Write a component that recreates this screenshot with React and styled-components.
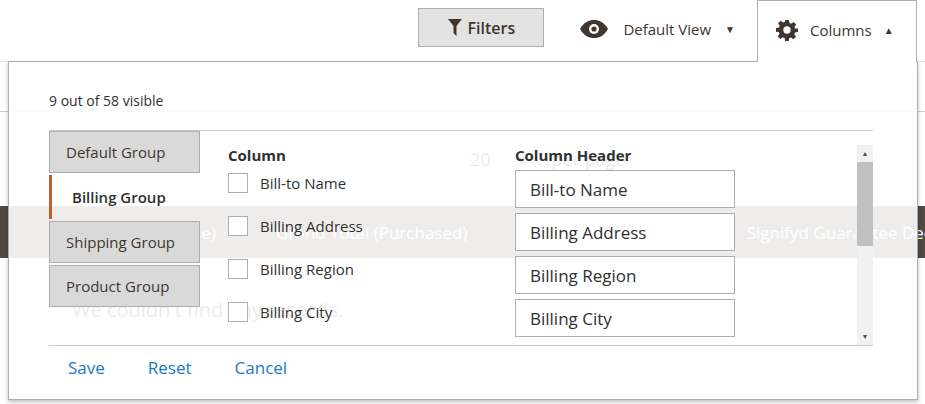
import React from 'react';
import styled, { createGlobalStyle } from 'styled-components';

const Global = createGlobalStyle`
  body { margin: 0; font-family: "Open Sans", "Liberation Sans", sans-serif; color: #303030; background: #fff; }
  * { box-sizing: border-box; }
`;

const Page = styled.div`
  position: relative;
  width: 925px;
  height: 404px;
  overflow: hidden;
`;

const Toolbar = styled.div`
  display: flex;
  justify-content: flex-end;
  align-items: flex-start;
  height: 62px;
  padding-right: 8px;
  border-bottom: 1px solid #e3e3e3;
`;

const FilterButton = styled.div`
  margin-top: 8px;
  width: 126px;
  height: 39px;
  background: #e3e3e3;
  border: 1px solid #adadad;
  display: flex;
  align-items: center;
  justify-content: center;
  gap: 6px;
  font-size: 16px;
  font-weight: 600;
  color: #41362f;
`;

const ViewSwitch = styled.div`
  margin: 0 22px 0 35px;
  height: 58px;
  display: flex;
  align-items: center;
  gap: 14px;
  font-size: 15px;
  color: #41362f;
`;

const ColumnsTab = styled.div`
  position: relative;
  z-index: 3;
  width: 160px;
  height: 62px;
  background: #fff;
  border: 1px solid #adadad;
  border-bottom: none;
  display: flex;
  align-items: center;
  gap: 12px;
  padding: 0 0 4px 18px;
  font-size: 15px;
  color: #41362f;
`;

const Caret = styled.span`
  font-size: 10px;
`;

const Backdrop = styled.div`
  display: flex;
  flex-direction: column;
`;

const Pager = styled.div`
  display: flex;
  gap: 26px;
  align-items: center;
  padding: 0 0 0 470px;
  height: 95px;
  font-size: 18px;
  color: #303030;
  border-top: 1px solid #ccc;
  margin-top: 49px;
`;

const GridHead = styled.div`
  height: 52px;
  background: #514943;
  color: #fff;
  display: flex;
  align-items: center;
  gap: 60px;
  padding-left: 70px;
  font-size: 17px;
  white-space: nowrap;
`;

const Empty = styled.div`
  padding: 38px 0 0 72px;
  font-size: 20px;
  color: #303030;
`;

const Panel = styled.div`
  position: absolute;
  z-index: 2;
  left: 8px;
  top: 61px;
  width: 910px;
  height: 339px;
  background: rgba(255, 255, 255, 0.9);
  border: 1px solid #adadad;
  box-shadow: 0 2px 4px rgba(0, 0, 0, 0.25);
  padding: 29px 44px 0 40px;
`;

const Count = styled.div`
  font-size: 14px;
  color: #303030;
  height: 39px;
`;

const Body = styled.div`
  display: flex;
  border-top: 1px solid #ccc;
  border-bottom: 1px solid #ccc;
  height: 216px;
`;

const Groups = styled.div`
  width: 151px;
  display: flex;
  flex-direction: column;
  gap: 2px;
`;

const Group = styled.div`
  height: ${p => (p.active ? '44px' : '42px')};
  display: flex;
  align-items: center;
  padding-left: ${p => (p.active ? '20px' : '16px')};
  font-size: 15px;
  background: ${p => (p.active ? 'transparent' : '#d9d9d9')};
  border: ${p => (p.active ? 'none' : '1px solid #adadad')};
  border-left: ${p => (p.active ? '3px solid #c15d2f' : '1px solid #adadad')};
  font-weight: ${p => (p.active ? 600 : 400)};
  color: ${p => (p.active ? '#303030' : '#41362f')};
`;

const Scroll = styled.div`
  flex: 1;
  display: flex;
  overflow: hidden;
  padding: 14px 0 0 28px;
`;

const ColList = styled.div`
  width: 287px;
  display: flex;
  flex-direction: column;
`;

const HeadList = styled.div`
  width: 220px;
  display: flex;
  flex-direction: column;
  gap: 5px;
`;

const Title = styled.div`
  font-size: 15px;
  font-weight: 700;
  height: ${p => p.h}px;
`;

const CheckRow = styled.div`
  display: flex;
  align-items: flex-start;
  gap: 12px;
  height: 43px;
  flex-shrink: 0;
  font-size: 15px;
`;

const Box = styled.span`
  width: 20px;
  height: 20px;
  border: 1px solid #adadad;
  background: #fff;
`;

const Field = styled.div`
  height: 38px;
  flex-shrink: 0;
  border: 1px solid #adadad;
  background: #fff;
  padding-left: 14px;
  display: flex;
  align-items: center;
  font-size: 17px;
`;

const ScrollBar = styled.div`
  width: 16px;
  margin: 0 0 0 auto;
  background: #f1f1f1;
  display: flex;
  flex-direction: column;
  align-items: center;
  font-size: 7px;
  color: #505050;
  padding: 4px 0;
`;

const Thumb = styled.div`
  width: 100%;
  height: 84px;
  background: #c1c1c1;
  margin: 4px 0;
`;

const Footer = styled.div`
  display: flex;
  gap: 43px;
  padding: 10px 0 0 19px;
`;

const Link = styled.span`
  font-size: 17px;
  color: #1979c3;
`;

const groups = ['Default Group', 'Billing Group', 'Shipping Group', 'Product Group'];
const cols = ['Bill-to Name', 'Billing Address', 'Billing Region', 'Billing City'];

export default function App() {
  return (
    <Page>
      <Global />
      <Toolbar>
        <FilterButton>
          <svg width="14" height="17" viewBox="0 0 14 17"><path d="M0 0h14L8.5 7v10L5.5 14V7z" fill="#41362f" /></svg>
          Filters
        </FilterButton>
        <ViewSwitch>
          <svg width="30" height="18" viewBox="0 0 30 18">
            <path d="M1 9C5 2 10 0 15 0s10 2 14 9c-4 7-9 9-14 9S5 16 1 9z" fill="#41362f" />
            <circle cx="15" cy="9" r="5" fill="#fff" />
            <circle cx="15" cy="9" r="2.6" fill="#41362f" />
          </svg>
          Default View <Caret>▼</Caret>
        </ViewSwitch>
        <ColumnsTab>
          <svg width="22" height="22" viewBox="0 0 24 24">
            <path fill="#41362f" fillRule="evenodd" d="M10 1h4l.6 3.2 2 .9 2.7-1.9 2.8 2.8-1.9 2.7.9 2L24 10v4l-3.2.6-.9 2 1.9 2.7-2.8 2.8-2.7-1.9-2 .9L14 24h-4l-.6-3.2-2-.9-2.7 1.9-2.8-2.8 1.9-2.7-.9-2L0 14v-4l3.2-.6.9-2L2.2 4.7 5 1.9l2.7 1.9 2-.9zM12 8a4 4 0 100 8 4 4 0 000-8z" />
          </svg>
          Columns <Caret>▲</Caret>
        </ColumnsTab>
      </Toolbar>
      <Backdrop>
        <Pager>20 <span>▾</span> per page</Pager>
        <GridHead>
          <span>Grand Total (Base)</span>
          <span>Grand Total (Purchased)</span>
          <span>Status</span>
          <span>Action</span>
          <span>Signifyd Guarantee Decision</span>
        </GridHead>
        <Empty>We couldn't find any records.</Empty>
      </Backdrop>
      <Panel>
        <Count>9 out of 58 visible</Count>
        <Body>
          <Groups>
            {groups.map(g => (
              <Group key={g} active={g === 'Billing Group'}>{g}</Group>
            ))}
          </Groups>
          <Scroll>
            <ColList>
              <Title h={29}>Column</Title>
              {cols.map(c => (
                <CheckRow key={c}><Box />{c}</CheckRow>
              ))}
            </ColList>
            <HeadList>
              <Title h={20}>Column Header</Title>
              {cols.map(c => (
                <Field key={c}>{c}</Field>
              ))}
            </HeadList>
            <ScrollBar>
              <span>▲</span>
              <Thumb />
              <span style={{ marginTop: 'auto' }}>▼</span>
            </ScrollBar>
          </Scroll>
        </Body>
        <Footer>
          <Link>Save</Link>
          <Link>Reset</Link>
          <Link>Cancel</Link>
        </Footer>
      </Panel>
    </Page>
  );
}
